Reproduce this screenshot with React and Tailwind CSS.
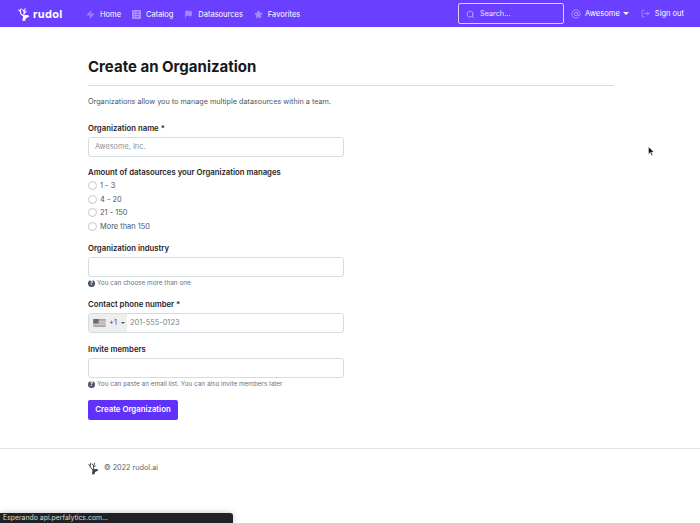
import React from 'react';
import { Zap, Search, AtSign, LogOut, Flag, Star } from 'lucide-react';

function RudolLogo({ className }) {
  return (
    <svg viewBox="0 0 14 16" className={className} fill="none" stroke="currentColor" strokeLinecap="round">
      <path d="M6 15 L6.6 9.6 C4.6 9 3 7 2.6 4.6 L1 2.6 M2.6 4.6 L3.6 1.4 M6.6 9.6 L7.2 5 L5.6 2.4 M7.2 5 L8.4 1.2 M7.4 6.6 L9.6 4.4" strokeWidth="1.2" />
      <path d="M5.4 15.4 L6 9.4 L8.6 8.6 L11.4 8.6 L13.4 10 L11.2 11.4 L9 12.6 L8.4 15.4 Z" fill="currentColor" stroke="none" />
    </svg>
  );
}

function CatalogIcon({ className }) {
  return (
    <svg viewBox="0 0 10 10" className={className}>
      <rect width="10" height="10" rx="1" fill="#a894ff" />
      <path d="M2 2.5 H3.4 M4.6 2.5 H8 M2 5 H3.4 M4.6 5 H8 M2 7.5 H3.4 M4.6 7.5 H8" stroke="#6a3fff" strokeWidth="0.8" />
    </svg>
  );
}

function NavItem({ icon, label }) {
  return (
    <div className="flex items-center gap-[5px]">
      {icon}
      <span className="text-[7.5px] text-white">{label}</span>
    </div>
  );
}

function Hint({ children }) {
  return (
    <div className="mt-[1px] flex items-center gap-[2px] text-[6.4px] leading-[10px] text-[#6b7280]">
      <span className="flex h-[7px] w-[7px] items-center justify-center rounded-full bg-[#4b5563] text-[6px] font-bold text-white">?</span>
      <span>{children}</span>
    </div>
  );
}

function Label({ children }) {
  return <div className="mb-[2px] text-[7.75px] leading-[13px] font-semibold text-[#1f2328]">{children}</div>;
}

function Radio({ label }) {
  return (
    <div className="flex h-[13.5px] items-center gap-[3px]">
      <span className="h-[9px] w-[9px] rounded-full border border-[#c4c8cc] bg-white" />
      <span className="text-[7.45px] text-[#4b5563]">{label}</span>
    </div>
  );
}

export default function App() {
  return (
    <div className="relative h-[523px] w-[700px] overflow-hidden bg-white font-['Inter',sans-serif]">
      {/* top bar */}
      <header className="flex h-[27px] items-center bg-[#6a3fff] pr-[16px] pl-[18px]">
        <div className="mt-[1px] flex w-[68px] items-center gap-[3px] text-white">
          <RudolLogo className="h-[15px] w-[12px]" />
          <span className="text-[11px] font-bold tracking-[0.3px]">rudol</span>
        </div>
        <div className="mt-[2px] flex items-center gap-[11px]">
          <NavItem label="Home" icon={<Zap className="h-[9px] w-[9px] fill-[#9a80ff] text-[#9a80ff]" />} />
          <NavItem label="Catalog" icon={<CatalogIcon className="h-[9px] w-[9px]" />} />
          <NavItem label="Datasources" icon={<Flag className="h-[9px] w-[9px] fill-[#a18aff] text-[#a18aff]" />} />
          <NavItem label="Favorites" icon={<Star className="h-[9px] w-[9px] fill-[#a18aff] text-[#a18aff]" />} />
        </div>
        <div className="ml-auto flex items-center">
          <div className="flex h-[21px] w-[106px] items-center gap-[5px] rounded-[2px] border border-[#d8ceff] pt-[1px] pl-[7px]">
            <Search className="h-[9px] w-[9px] text-[#c6b8ff]" />
            <span className="text-[7.3px] text-[#ece7ff]">Search...</span>
          </div>
          <AtSign className="ml-[7px] h-[10px] w-[10px] text-[#b4a0ff]" />
          <span className="mt-[1px] ml-[4px] text-[7.6px] text-white">Awesome</span>
          <span className="ml-[3px] h-0 w-0 border-x-[3px] border-t-[3px] border-x-transparent border-t-white" />
          <LogOut className="ml-[12px] h-[9px] w-[9px] text-[#b4a0ff]" />
          <span className="mt-[1px] ml-[5px] text-[7.5px] text-white">Sign out</span>
        </div>
      </header>

      <main className="mx-[86px] w-[528px] pt-[31px] pl-[2px]">
        <h1 className="text-[15px] leading-[18px] font-bold text-[#17191c]">Create an Organization</h1>
        <hr className="mt-[9px] border-t border-[#dcd9d9]" />
        <p className="mt-[10px] text-[7.25px] leading-[12px] text-[#4b5563]">
          Organizations allow you to manage multiple datasources within a team.
        </p>

        <div className="mt-[14px] w-[256px]">
          <Label>Organization name *</Label>
          <div className="flex h-[20px] items-center rounded-[3px] border border-[#d3dde0] px-[6px] text-[7.35px] text-[#8a9096]">
            Awesome, Inc.
          </div>

          <div className="mt-[9px] text-[7.75px] leading-[13px] font-semibold text-[#1f2328]">
            Amount of datasources your Organization manages
          </div>
          <div>
            <Radio label="1 - 3" />
            <Radio label="4 - 20" />
            <Radio label="21 - 150" />
            <Radio label="More than 150" />
          </div>

          <div className="mt-[9px]">
            <Label>Organization industry</Label>
          </div>
          <div className="h-[20px] rounded-[3px] border border-[#d3dde0]" />
          <Hint>You can choose more than one</Hint>

          <div className="mt-[10px]">
            <Label>Contact phone number *</Label>
          </div>
          <div className="flex h-[20px] items-center overflow-hidden rounded-[3px] border border-[#d3dde0]">
            <div className="flex h-full w-[38px] items-center bg-[#eeeeee] pl-[4px]">
              <svg viewBox="0 0 14 9" className="h-[8px] w-[13px]">
                <rect width="14" height="9" fill="#a8a8a8" />
                <rect y="2" width="14" height="1" fill="#d8d8d8" />
                <rect y="4" width="14" height="1" fill="#d8d8d8" />
                <rect y="6" width="14" height="1" fill="#d8d8d8" />
                <rect width="6" height="5" fill="#6b6b6b" />
              </svg>
              <span className="ml-[3px] text-[7.45px] text-[#4b5563]">+1</span>
              <span className="ml-[4px] h-0 w-0 border-x-[2px] border-t-[2px] border-x-transparent border-t-[#4b5563]" />
            </div>
            <span className="ml-[3px] text-[7.45px] text-[#7b8187]">201-555-0123</span>
          </div>

          <div className="mt-[10px]">
            <Label>Invite members</Label>
          </div>
          <div className="h-[20px] rounded-[3px] border border-[#d3dde0]" />
          <Hint>You can paste an email list. You can also invite members later</Hint>

          <button className="mt-[11px] flex h-[20px] w-[90px] items-center justify-center rounded-[2px] bg-[#5f31fb] text-[7.8px] font-semibold text-white">
            Create Organization
          </button>
        </div>
      </main>

      <footer className="mt-[28px] border-t border-[#e4e4e4] pt-[13px] pl-[88px]">
        <div className="flex items-center gap-[5px] text-[#5f6368]">
          <RudolLogo className="h-[13px] w-[11px] text-[#3f4347]" />
          <span className="text-[7.25px]">© 2022 rudol.ai</span>
        </div>
      </footer>

      {/* browser status bubble */}
      <div className="absolute bottom-0 left-0 flex h-[10px] w-[233px] items-center rounded-tr-[3px] bg-[#202124] pl-[3px] shadow-[0_0_6px_rgba(0,0,0,0.25)]">
        <span className="text-[6.9px] leading-[10px] text-[#d8d8d8]">Esperando api.perfalytics.com...</span>
      </div>

      {/* mouse cursor */}
      <svg viewBox="0 0 8 12" className="absolute top-[146px] left-[648px] h-[11px] w-[7px]">
        <path d="M0.5 0.5 L0.5 9 L2.6 7.2 L4 10.5 L5.4 9.9 L4 6.8 L6.8 6.6 Z" fill="#111" stroke="#fff" strokeWidth="0.6" />
      </svg>
    </div>
  );
}
